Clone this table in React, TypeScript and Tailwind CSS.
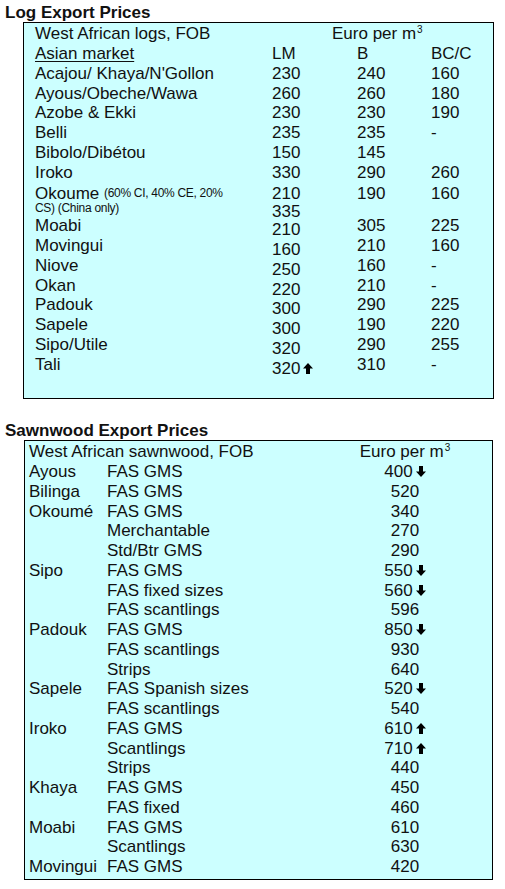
import React from "react";

type Dir = "up" | "down" | undefined;

function Arrow({ dir }: { dir: "up" | "down" }) {
  return (
    <svg width="10" height="11" viewBox="0 0 10 11" className="ml-[3px] inline-block">
      {dir === "up" ? (
        <polygon points="5,0 10,5.5 7,5.5 7,11 3,11 3,5.5 0,5.5" fill="#000" />
      ) : (
        <polygon points="5,11 10,5.5 7,5.5 7,0 3,0 3,5.5 0,5.5" fill="#000" />
      )}
    </svg>
  );
}

function Price({ v, dir }: { v: string; dir?: Dir }) {
  return (
    <span className="inline-flex items-center">
      {v}
      {dir && <Arrow dir={dir} />}
    </span>
  );
}

function Cube() {
  return <sup className="text-[10px] relative -top-[6px] ml-px">3</sup>;
}

const logs: { name: string; lm: string; b: string; bc: string; dir?: Dir }[] = [
  { name: "Acajou/ Khaya/N'Gollon", lm: "230", b: "240", bc: "160" },
  { name: "Ayous/Obeche/Wawa", lm: "260", b: "260", bc: "180" },
  { name: "Azobe & Ekki", lm: "230", b: "230", bc: "190" },
  { name: "Belli", lm: "235", b: "235", bc: "-" },
  { name: "Bibolo/Dibétou", lm: "150", b: "145", bc: "" },
  { name: "Iroko", lm: "330", b: "290", bc: "260" },
];

const logs2: { name: string; lm: string; b: string; bc: string; dir?: Dir }[] = [
  { name: "Moabi", lm: "210", b: "305", bc: "225" },
  { name: "Movingui", lm: "160", b: "210", bc: "160" },
  { name: "Niove", lm: "250", b: "160", bc: "-" },
  { name: "Okan", lm: "220", b: "210", bc: "-" },
  { name: "Padouk", lm: "300", b: "290", bc: "225" },
  { name: "Sapele", lm: "300", b: "190", bc: "220" },
  { name: "Sipo/Utile", lm: "320", b: "290", bc: "255" },
  { name: "Tali", lm: "320", b: "310", bc: "-", dir: "up" },
];

const sawn: { sp: string; grade: string; price: string; dir?: Dir }[] = [
  { sp: "Ayous", grade: "FAS GMS", price: "400", dir: "down" },
  { sp: "Bilinga", grade: "FAS GMS", price: "520" },
  { sp: "Okoumé", grade: "FAS GMS", price: "340" },
  { sp: "", grade: "Merchantable", price: "270" },
  { sp: "", grade: "Std/Btr GMS", price: "290" },
  { sp: "Sipo", grade: "FAS GMS", price: "550", dir: "down" },
  { sp: "", grade: "FAS fixed sizes", price: "560", dir: "down" },
  { sp: "", grade: "FAS scantlings", price: "596" },
  { sp: "Padouk", grade: "FAS GMS", price: "850", dir: "down" },
  { sp: "", grade: "FAS scantlings", price: "930" },
  { sp: "", grade: "Strips", price: "640" },
  { sp: "Sapele", grade: "FAS Spanish sizes", price: "520", dir: "down" },
  { sp: "", grade: "FAS scantlings", price: "540" },
  { sp: "Iroko", grade: "FAS GMS", price: "610", dir: "up" },
  { sp: "", grade: "Scantlings", price: "710", dir: "up" },
  { sp: "", grade: "Strips", price: "440" },
  { sp: "Khaya", grade: "FAS GMS", price: "450" },
  { sp: "", grade: "FAS fixed", price: "460" },
  { sp: "Moabi", grade: "FAS GMS", price: "610" },
  { sp: "", grade: "Scantlings", price: "630" },
  { sp: "Movingui", grade: "FAS GMS", price: "420" },
];

function LogRow({ name, lm, b, bc, dir, shift }: { name: string; lm: string; b: string; bc: string; dir?: Dir; shift?: boolean }) {
  return (
    <div className="flex h-[19.75px] items-center">
      <div className="w-[237px] whitespace-nowrap">{name}</div>
      <div className={"w-[85px] " + (shift ? "translate-y-[4px]" : "")}>
        <Price v={lm} dir={dir} />
      </div>
      <div className="w-[74px]">{b}</div>
      <div>{bc}</div>
    </div>
  );
}

export default function App() {
  return (
    <div className="w-[505px] h-[889px] bg-white text-[#111] font-['Liberation_Sans',Arial,sans-serif] text-[17px] leading-none">
      <div className="h-[22px] pl-[5px] pt-[4px] font-bold text-[17px]">Log Export Prices</div>
      <div className="ml-[23px] w-[471px] h-[377px] border border-black bg-[#ccffff] pl-[11px] pt-px">
        <div className="flex h-[19.75px] items-center">
          <div className="w-[297px]">West African logs, FOB</div>
          <div>
            Euro per m<Cube />
          </div>
        </div>
        <div className="flex h-[19.75px] items-center">
          <div className="w-[237px]">
            <span className="underline underline-offset-[2px]">Asian market</span>
          </div>
          <div className="w-[85px]">LM</div>
          <div className="w-[74px]">B</div>
          <div>BC/C</div>
        </div>
        {logs.map((r) => (
          <LogRow key={r.name} {...r} />
        ))}
        <div className="flex h-[34px]">
          <div className="w-[237px] pt-[2px] whitespace-nowrap">
            <div className="h-[18px] flex items-center">
              Okoume&nbsp;<span className="text-[12px] tracking-[-0.3px]">(60% CI, 40% CE, 20%</span>
            </div>
            <div className="text-[12px] tracking-[-0.3px]">CS) (China only)</div>
          </div>
          <div className="w-[85px] pt-[2px]">
            <div className="h-[18px] flex items-center">210</div>
            <div className="h-[18px] flex items-center">335</div>
          </div>
          <div className="w-[74px] pt-[2px]">
            <div className="h-[18px] flex items-center">190</div>
          </div>
          <div className="pt-[2px]">
            <div className="h-[18px] flex items-center">160</div>
          </div>
        </div>
        {logs2.map((r) => (
          <LogRow key={r.name} {...r} shift />
        ))}
      </div>

      <div className="mt-[22px] h-[19px] pl-[5px] font-bold text-[17px] flex items-center">Sawnwood Export Prices</div>
      <div className="ml-[24px] w-[469px] h-[440px] border border-black bg-[#ccffff] pl-[4px] pt-px">
        <div className="flex h-[19.75px] items-center">
          <div className="w-[328px]">West African sawnwood, FOB</div>
          <div className="w-[96px] text-center">
            Euro per m<Cube />
          </div>
        </div>
        {sawn.map((r, i) => (
          <div key={i} className="flex h-[19.75px] items-center">
            <div className="w-[78px]">{r.sp}</div>
            <div className="w-[250px]">{r.grade}</div>
            <div className="w-[96px] flex justify-center">
              <Price v={r.price} dir={r.dir} />
            </div>
          </div>
        ))}
      </div>
    </div>
  );
}
